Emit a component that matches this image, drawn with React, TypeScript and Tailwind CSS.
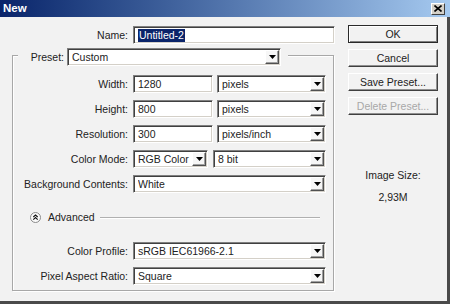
import React from "react";

const sunken =
  "border border-t-[#808080] border-l-[#808080] border-b-white border-r-white shadow-[inset_1px_1px_0_#404040,inset_-1px_-1px_0_#d4d0c8] bg-white";

function Input({ w, children }: { w: string; children: React.ReactNode }) {
  return (
    <div className={`${sunken} ${w} h-[18px] flex items-center pl-[4px] shrink-0`}>
      {children}
    </div>
  );
}

function Select({ w, children }: { w: string; children: React.ReactNode }) {
  return (
    <div className={`${sunken} ${w} h-[18px] flex items-center pl-[4px] shrink-0`}>
      <span className="flex-1 truncate">{children}</span>
      <div className="w-[14px] h-[14px] mr-[1px] flex items-center justify-center bg-[#f6f6f6] border border-t-[#ffffff] border-l-[#ffffff] border-b-[#505050] border-r-[#505050] shadow-[inset_-1px_-1px_0_#a0a0a0]">
        <svg width="7" height="4" viewBox="0 0 7 4">
          <polygon points="0,0 7,0 3.5,4" fill="#000" />
        </svg>
      </div>
    </div>
  );
}

function Row({ label, children }: { label: string; children: React.ReactNode }) {
  return (
    <div className="flex items-center h-[18px]">
      <div className="w-[115px] text-right pr-0 whitespace-nowrap">{label}</div>
      <div className="ml-[5px] flex items-center gap-[4px]">{children}</div>
    </div>
  );
}

function Btn({ children, def, disabled }: { children: React.ReactNode; def?: boolean; disabled?: boolean }) {
  return (
    <div
      className={`h-[18px] w-[90px] flex items-center justify-center bg-[#f2f2f2] ${
        def
          ? "border border-[#2a2a2a] shadow-[inset_1px_1px_0_#ffffff,inset_-1px_-1px_0_#808080]"
          : "border border-t-white border-l-white border-b-[#404040] border-r-[#404040] shadow-[inset_-1px_-1px_0_#909090]"
      } ${disabled ? "text-[#a8a8a8]" : ""}`}
    >
      {children}
    </div>
  );
}

export default function App() {
  return (
    <div className="w-[450px] h-[304px] flex flex-col bg-[#f2f2f2] font-['Liberation_Sans',Arial,sans-serif] text-[10.5px] leading-[13px] text-[#222222] overflow-hidden">
      {/* Title bar */}
      <div className="h-[17px] shrink-0 flex items-center bg-gradient-to-r from-[#0a246a] to-[#a6caf0] pl-[3px]">
        <span className="text-white font-bold text-[11.5px]">New</span>
        <div className="ml-auto mr-[5px] w-[14px] h-[12px] bg-[#d4d0c8] border border-t-white border-l-white border-b-[#404040] border-r-[#404040] flex items-center justify-center">
          <svg width="8" height="7" viewBox="0 0 8 7">
            <path d="M0.5 0.5 L7.5 6.5 M7.5 0.5 L0.5 6.5" stroke="#000" strokeWidth="1.6" />
          </svg>
        </div>
      </div>

      {/* Body */}
      <div className="flex flex-1 border-r-[3px] border-b-[3px] border-[#4a4a4a]">
        <div className="w-[336px] flex flex-col pt-[9px]">
          <div className="flex items-center">
            <div className="w-[128px] text-right">Name:</div>
            <div className="ml-[5px]">
              <Input w="w-[202px]">
                <span className="bg-[#0a246a] text-white px-[1px]">Untitled-2</span>
              </Input>
            </div>
          </div>

          {/* group box */}
          <div className="ml-[12px] mt-[11px] w-[322px] border border-[#a8a8a8] shadow-[1px_1px_0_#ffffff,inset_1px_1px_0_#ffffff] pb-[5px] flex flex-col">
            <div className="-mt-[8px] ml-[5px] w-[270px] bg-[#f2f2f2] flex items-center h-[18px]">
              <div className="w-[46px] text-right">Preset:</div>
              <div className="ml-[3px]">
                <Select w="w-[214px]">Custom</Select>
              </div>
            </div>

            <div className="mt-[9px] flex flex-col gap-[7px]">
              <Row label="Width:">
                <Input w="w-[80px]">1280</Input>
                <Select w="w-[109px]">pixels</Select>
              </Row>
              <Row label="Height:">
                <Input w="w-[80px]">800</Input>
                <Select w="w-[109px]">pixels</Select>
              </Row>
              <Row label="Resolution:">
                <Input w="w-[80px]">300</Input>
                <Select w="w-[109px]">pixels/inch</Select>
              </Row>
              <Row label="Color Mode:">
                <Select w="w-[75px]">RGB Color</Select>
                <div className="ml-[1px]">
                  <Select w="w-[113px]">8 bit</Select>
                </div>
              </Row>
              <Row label="Background Contents:">
                <Select w="w-[193px]">White</Select>
              </Row>
            </div>

            <div className="mt-[18px] h-[12px] flex items-center pl-[17px] pr-[13px]">
              <svg width="11" height="11" viewBox="0 0 11 11">
                <circle cx="5.5" cy="5.5" r="5" fill="#fafafa" stroke="#8a8a8a" />
                <path d="M3.3 5 L5.5 3 L7.7 5 M3.3 7.6 L5.5 5.6 L7.7 7.6" stroke="#111" strokeWidth="1.1" fill="none" />
              </svg>
              <span className="ml-[7px]">Advanced</span>
              <div className="ml-[5px] flex-1 h-[1px] bg-[#b0b0b0] shadow-[0_1px_0_#ffffff]" />
            </div>

            <div className="mt-[19px] flex flex-col gap-[7px]">
              <Row label="Color Profile:">
                <Select w="w-[193px]">sRGB IEC61966-2.1</Select>
              </Row>
              <Row label="Pixel Aspect Ratio:">
                <Select w="w-[193px]">Square</Select>
              </Row>
            </div>
          </div>
        </div>

        <div className="ml-[12px] w-[90px] flex flex-col pt-[8px]">
          <div className="flex flex-col gap-[6px]">
            <Btn def>OK</Btn>
            <Btn>Cancel</Btn>
            <Btn>Save Preset...</Btn>
            <Btn disabled>Delete Preset...</Btn>
          </div>
          <div className="mt-[54px] text-center">Image Size:</div>
          <div className="mt-[9px] text-center">2,93M</div>
        </div>
      </div>
    </div>
  );
}
